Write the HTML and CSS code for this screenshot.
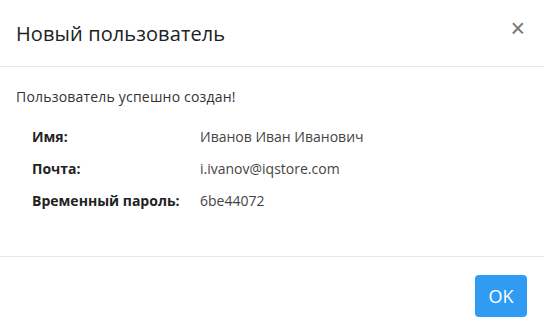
FILE: index.html
```html
<!DOCTYPE html>
<html lang="ru">
<head>
<meta charset="utf-8">
<link rel="stylesheet" href="styles.css">
</head>
<body>
<div class="modal">
  <div class="modal-header">
    <h5 class="modal-title">Новый пользователь</h5>
    <button class="close" type="button">&times;</button>
  </div>
  <div class="modal-body">
    <p class="lead-text">Пользователь успешно создан!</p>
    <div class="info">
      <div class="label">Имя:</div><div class="value">Иванов Иван Иванович</div>
      <div class="label">Почта:</div><div class="value">i.ivanov@iqstore.com</div>
      <div class="label">Временный пароль:</div><div class="value">6be44072</div>
    </div>
  </div>
  <div class="modal-footer">
    <button class="btn" type="button">OK</button>
  </div>
</div>
</body>
</html>
```
FILE: styles.css
```css
html, body { margin: 0; padding: 0; background: #fff; }
body { font-family: "Open Sans", "Noto Sans", sans-serif; color: #212529; width: 544px; height: 333px; overflow: hidden; }
.modal { display: flex; flex-direction: column; height: 333px; }
.modal-header { display: flex; align-items: center; justify-content: space-between; height: 67px; box-sizing: border-box; padding: 0 16px; border-bottom: 1px solid #e4e6e8; }
.modal-title { margin: 0; font-size: 20px; font-weight: 400; color: #222; letter-spacing: 0.1px; }
.close { border: 0; background: none; padding: 0; font-size: 25px; font-weight: 400; color: #777; line-height: 1; margin-top: -10px; margin-right: 3px; font-family: "Liberation Sans", sans-serif; }
.modal-body { flex: 1; padding: 20px 16px 0; }
.lead-text { margin: 0 0 20px; font-size: 14px; line-height: 20px; color: #333; letter-spacing: 0.2px; }
.info { display: grid; grid-template-columns: 168px 1fr; row-gap: 12px; padding-left: 16px; font-size: 14px; line-height: 20px; }
.label { font-weight: 700; color: #222; }
.value { color: #444; }
.modal-footer { border-top: 1px solid #e4e6e8; display: flex; justify-content: flex-end; padding: 18px 17px 16px; }
.btn { width: 52px; height: 42px; border: 0; border-radius: 4px; background: #2f9bf3; color: #fff; font-family: inherit; font-size: 18px; padding: 0; }
```
